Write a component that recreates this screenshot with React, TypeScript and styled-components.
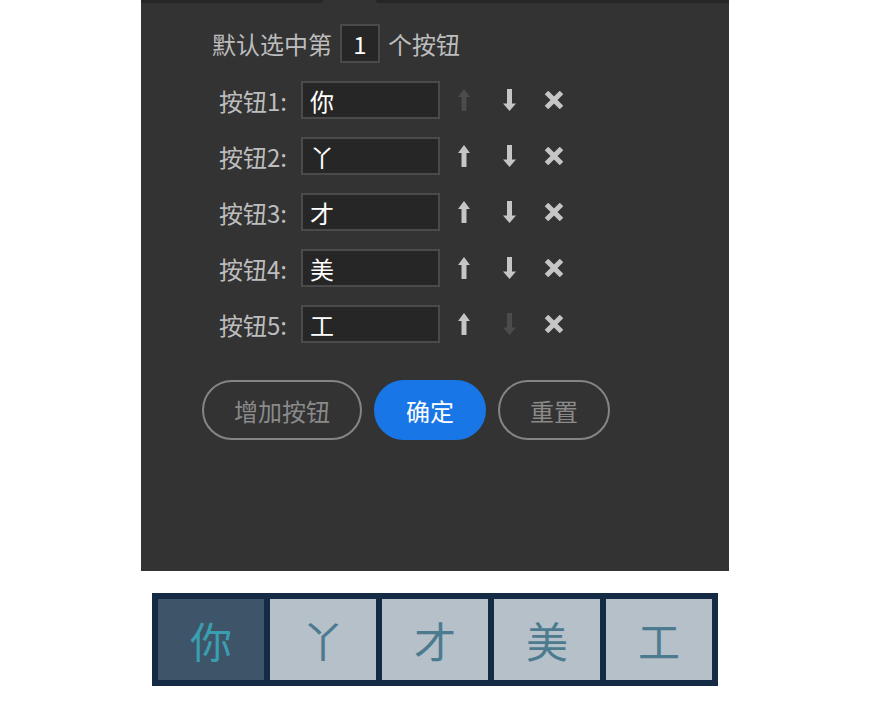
import styled, { createGlobalStyle } from "styled-components";
import { useState } from "react";

const GlobalStyle = createGlobalStyle`
  body {
    margin: 0;
    background: #ffffff;
    font-family: "Noto Sans CJK SC", "Noto Sans", sans-serif;
  }
`;

const Page = styled.div`
  display: flex;
  flex-direction: column;
  align-items: center;
  width: 870px;
`;

const Panel = styled.div`
  width: 588px;
  height: 571px;
  background: #333333;
  display: flex;
  flex-direction: column;
`;

const TabStrip = styled.div`
  display: flex;
  gap: 53px;
  height: 3px;
`;

const TabPiece = styled.div<{ $grow?: boolean }>`
  background: #262626;
  width: ${(p) => (p.$grow ? "auto" : "182px")};
  flex: ${(p) => (p.$grow ? 1 : "none")};
  border-radius: ${(p) => (p.$grow ? "0 0 0 3px" : "0 0 3px 0")};
`;

const TopRow = styled.div`
  display: flex;
  align-items: center;
  gap: 8px;
  margin: 21px 0 0 71px;
  font-size: 24px;
  color: #bdbdbd;
`;

const IndexBox = styled.div`
  width: 40px;
  height: 39px;
  box-sizing: border-box;
  border: 2px solid #4a4a4a;
  background: #262626;
  color: #ffffff;
  display: flex;
  align-items: center;
  justify-content: center;
  font-size: 24px;
`;

const List = styled.div`
  display: flex;
  flex-direction: column;
  gap: 18px;
  margin: 18px 0 0 56px;
`;

const Row = styled.div`
  display: flex;
  align-items: center;
  height: 38px;
`;

const Label = styled.div`
  width: 90px;
  margin-right: 14px;
  text-align: right;
  font-size: 24px;
  color: #bdbdbd;
  white-space: nowrap;
`;

const TextBox = styled.div`
  width: 139px;
  height: 38px;
  box-sizing: border-box;
  border: 2px solid #4a4a4a;
  background: #262626;
  color: #ffffff;
  font-size: 24px;
  padding-left: 7px;
  display: flex;
  align-items: center;
`;

const Icons = styled.div`
  display: flex;
  align-items: center;
  gap: 21px;
  margin-left: 12px;
`;

const IconButton = styled.div<{ $off?: boolean }>`
  width: 24px;
  height: 24px;
  display: flex;
  align-items: center;
  justify-content: center;
  color: ${(p) => (p.$off ? "#4b4b4b" : "#c6c6c6")};
  cursor: ${(p) => (p.$off ? "default" : "pointer")};
`;

const Actions = styled.div`
  display: flex;
  gap: 12px;
  margin: 37px 0 0 61px;
`;

const Pill = styled.button<{ $primary?: boolean }>`
  height: 60px;
  padding: 0 30px;
  border-radius: 30px;
  box-sizing: border-box;
  font-family: inherit;
  font-size: 24px;
  border: 2px solid ${(p) => (p.$primary ? "#1976e6" : "#858585")};
  background: ${(p) => (p.$primary ? "#1976e6" : "transparent")};
  color: ${(p) => (p.$primary ? "#ffffff" : "#8a8a8a")};
  cursor: pointer;
`;

const Preview = styled.div`
  margin-top: 22px;
  width: 566px;
  box-sizing: border-box;
  padding: 6px;
  background: #142a45;
  display: grid;
  grid-template-columns: repeat(5, 1fr);
  gap: 6px;
`;

const Cell = styled.div<{ $active?: boolean }>`
  height: 81px;
  display: flex;
  align-items: center;
  justify-content: center;
  background: ${(p) => (p.$active ? "#3e5468" : "#b6c0c9")};
  color: ${(p) => (p.$active ? "#3b9db0" : "#4c7b90")};
  font-size: 42px;
  line-height: 1;
`;

const UpArrow = () => (
  <svg width="12" height="22" viewBox="0 0 12 22">
    <path d="M6 0 L12 8 H8.5 V22 H3.5 V8 H0 Z" fill="currentColor" />
  </svg>
);

const DownArrow = () => (
  <svg width="13" height="22" viewBox="0 0 13 22">
    <path d="M6.5 22 L13 14.5 H9 V0 H4 V14.5 H0 Z" fill="currentColor" />
  </svg>
);

const Cross = () => (
  <svg width="20" height="18" viewBox="0 0 20 18">
    <path
      d="M2.5 1.5 L17.5 16.5 M17.5 1.5 L2.5 16.5"
      stroke="currentColor"
      strokeWidth="5"
    />
  </svg>
);

const App = () => {
  const [items] = useState(["你", "丫", "才", "美", "工"]);
  const selected = 1;

  return (
    <Page>
      <GlobalStyle />
      <Panel>
        <TabStrip>
          <TabPiece />
          <TabPiece $grow />
        </TabStrip>
        <TopRow>
          <span>默认选中第</span>
          <IndexBox>{selected}</IndexBox>
          <span>个按钮</span>
        </TopRow>
        <List>
          {items.map((item, i) => (
            <Row key={"row_" + i}>
              <Label>按钮{i + 1}:</Label>
              <TextBox>{item}</TextBox>
              <Icons>
                <IconButton $off={i === 0}>
                  <UpArrow />
                </IconButton>
                <IconButton $off={i === items.length - 1}>
                  <DownArrow />
                </IconButton>
                <IconButton>
                  <Cross />
                </IconButton>
              </Icons>
            </Row>
          ))}
        </List>
        <Actions>
          <Pill>增加按钮</Pill>
          <Pill $primary>确定</Pill>
          <Pill>重置</Pill>
        </Actions>
      </Panel>
      <Preview>
        {items.map((item, i) => (
          <Cell key={"cell_" + i} $active={i + 1 === selected}>
            {item}
          </Cell>
        ))}
      </Preview>
    </Page>
  );
};

export default App;
